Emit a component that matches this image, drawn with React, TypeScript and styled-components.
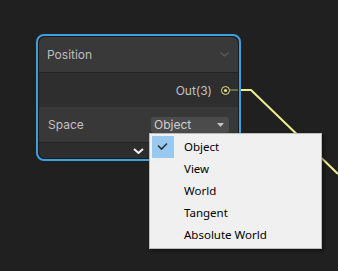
import styled, { createGlobalStyle } from "styled-components";

const GlobalStyle = createGlobalStyle`
  html, body {
    margin: 0;
    padding: 0;
    background: #202020;
  }
`;

const Canvas = styled.div`
  position: relative;
  width: 338px;
  height: 271px;
  background: #202020;
  overflow: hidden;
  font-family: Inter, "Noto Sans", sans-serif;
`;

const WireLayer = styled.svg`
  position: absolute;
  left: 0;
  top: 0;
`;

const NodeFrame = styled.div`
  position: absolute;
  left: 36px;
  top: 34px;
  width: 205px;
  height: 127px;
  box-sizing: border-box;
  border: 2px solid #3b9fe0;
  border-radius: 8px;
  padding: 1px;
  background: #1b1b1b;
`;

const NodeBody = styled.div`
  display: flex;
  flex-direction: column;
  height: 100%;
  border-radius: 6px;
  overflow: hidden;
`;

const Header = styled.div`
  height: 35px;
  flex-shrink: 0;
  display: flex;
  align-items: center;
  justify-content: space-between;
  padding: 0 9px 0 8px;
  background: #393939;
  border-bottom: 1px solid #242424;
`;

const Title = styled.span`
  font-size: 12px;
  color: #bdbdbd;
`;

const Row = styled.div<{ $bg: string; $h: number }>`
  height: ${(p) => p.$h}px;
  flex-shrink: 0;
  display: flex;
  align-items: center;
  background: ${(p) => p.$bg};
`;

const OutLabel = styled.span`
  margin-left: auto;
  font-size: 12px;
  color: #c2c2c2;
`;

const Port = styled.div`
  width: 9px;
  height: 9px;
  margin-left: 9px;
  box-sizing: border-box;
  border: 1.5px solid #e4e47e;
  border-radius: 50%;
  background: #2e2e2e;
  display: flex;
  align-items: center;
  justify-content: center;

  &::after {
    content: "";
    width: 3px;
    height: 3px;
    border-radius: 50%;
    background: #e4e47e;
  }
`;

const Stub = styled.div`
  width: 8px;
  height: 2px;
  background: #6c6c3e;
`;

const FieldLabel = styled.span`
  margin-left: 9px;
  font-size: 12px;
  color: #c2c2c2;
`;

const Select = styled.div`
  margin-left: auto;
  margin-right: 9px;
  width: 78px;
  height: 16px;
  box-sizing: border-box;
  display: flex;
  align-items: center;
  justify-content: space-between;
  padding: 0 5px 0 3px;
  border-radius: 3px;
  background: #4b4b4b;
  font-size: 12px;
  color: #cfcfcf;
`;

const Footer = styled.div`
  flex: 1;
  display: flex;
  align-items: center;
  justify-content: center;
  background: #2d2d2d;
  border-top: 1px solid #242424;
`;

const Menu = styled.div`
  position: absolute;
  left: 149px;
  top: 133px;
  width: 173px;
  box-sizing: border-box;
  padding: 2px;
  background: #f0f0f0;
  border: 1px solid #bcbcbc;
  box-shadow: 2px 2px 3px rgba(0, 0, 0, 0.45);
  font-family: "Noto Sans", "Open Sans", sans-serif;
`;

const MenuItem = styled.div`
  height: 22px;
  box-sizing: border-box;
  padding-bottom: 1px;
  display: flex;
  align-items: center;
  font-size: 11.5px;
  color: #000;
`;

const CheckBox = styled.div<{ $on: boolean }>`
  width: 22px;
  height: 22px;
  margin-top: 1px;
  margin-right: 10px;
  background: ${(p) => (p.$on ? "#99c9ef" : "transparent")};
`;

const items = ["Object", "View", "World", "Tangent", "Absolute World"];

export default function App() {
  return (
    <Canvas>
      <GlobalStyle />
      <WireLayer width={338} height={271}>
        <path
          d="M230 90 H251 L338 174"
          fill="none"
          stroke="#eeee8c"
          strokeWidth={2}
          strokeLinejoin="round"
        />
      </WireLayer>
      <NodeFrame>
        <NodeBody>
          <Header>
            <Title>Position</Title>
            <svg width="9" height="5" viewBox="0 0 9 5">
              <path d="M0.5 0.5 L4.5 4 L8.5 0.5" fill="none" stroke="#5c5c5c" strokeWidth={1.2} />
            </svg>
          </Header>
          <Row $bg="#2e2e2e" $h={34}>
            <OutLabel>Out(3)</OutLabel>
            <Port />
            <Stub />
          </Row>
          <Row $bg="#383838" $h={35}>
            <FieldLabel>Space</FieldLabel>
            <Select>
              <span>Object</span>
              <svg width="7" height="4" viewBox="0 0 7 4">
                <path d="M0 0 H7 L3.5 4 Z" fill="#c4c4c4" />
              </svg>
            </Select>
          </Row>
          <Footer>
            <svg width="11" height="6" viewBox="0 0 11 6">
              <path d="M1 1 L5.5 5 L10 1" fill="none" stroke="#f2f2f2" strokeWidth={2} />
            </svg>
          </Footer>
        </NodeBody>
      </NodeFrame>
      <Menu>
        {items.map((label, i) => (
          <MenuItem key={label}>
            <CheckBox $on={i === 0}>
              {i === 0 && (
                <svg width="22" height="22" viewBox="0 0 22 22">
                  <path d="M6 9.5 L9.5 13 L15 7.5" fill="none" stroke="#333" strokeWidth={1.6} />
                </svg>
              )}
            </CheckBox>
            {label}
          </MenuItem>
        ))}
      </Menu>
    </Canvas>
  );
}
